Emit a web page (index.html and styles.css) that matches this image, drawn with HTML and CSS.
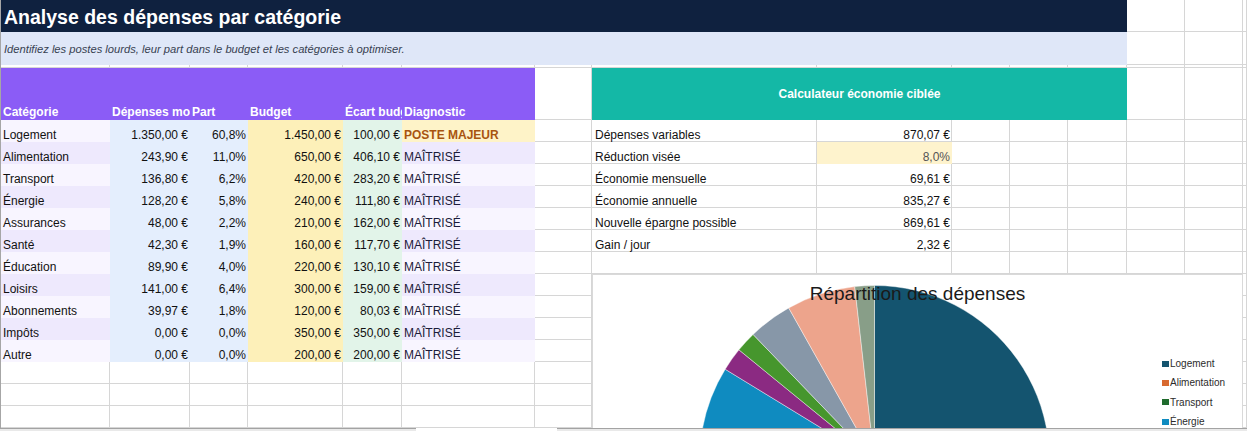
FILE: index.html
```html
<!DOCTYPE html>
<html lang="fr">
<head>
<meta charset="utf-8">
<title>Analyse des dépenses par catégorie</title>
<link rel="stylesheet" href="styles.css">
</head>
<body>
<div class="sheet">
  <div class="grid">
    <!-- row 1 -->
    <div class="c title">Analyse des dépenses par catégorie</div>
    <div class="c e"></div><div class="c e"></div><div class="c e"></div>
    <!-- row 2 -->
    <div class="c sub">Identifiez les postes lourds, leur part dans le budget et les catégories à optimiser.</div>
    <div class="c e"></div><div class="c e"></div><div class="c e"></div>
    <!-- row 3 -->
    <div class="c e"></div><div class="c e"></div><div class="c e"></div><div class="c e"></div><div class="c e"></div>
    <div class="c e"></div><div class="c e"></div><div class="c e"></div><div class="c e"></div><div class="c e"></div>
    <div class="c e"></div><div class="c e"></div><div class="c e"></div><div class="c e"></div><div class="c e"></div>
    <!-- row 4 header -->
    <div class="c hd">Catégorie</div>
    <div class="c hd">Dépenses mois</div>
    <div class="c hd">Part</div>
    <div class="c hd">Budget</div>
    <div class="c hd">Écart budget</div>
    <div class="c hd">Diagnostic</div>
    <div class="c e"></div>
    <div class="c teal">Calculateur économie ciblée</div>
    <div class="c e"></div><div class="c e"></div><div class="c e"></div>

    <!-- data 1 -->
    <div class="c la">Logement</div><div class="c bl r">1.350,00 €</div><div class="c bl r">60,8%</div><div class="c ye r">1.450,00 €</div><div class="c gr r">100,00 €</div><div class="c maj">POSTE MAJEUR</div>
    <div class="c e"></div><div class="c e lab">Dépenses variables</div><div class="c e r">870,07 €</div>
    <div class="c e"></div><div class="c e"></div><div class="c e"></div><div class="c e"></div><div class="c e"></div><div class="c e"></div>
    <!-- data 2 -->
    <div class="c lb">Alimentation</div><div class="c bl r">243,90 €</div><div class="c bl r">11,0%</div><div class="c ye r">650,00 €</div><div class="c gr r">406,10 €</div><div class="c lb ok">MAÎTRISÉ</div>
    <div class="c e"></div><div class="c e lab">Réduction visée</div><div class="c pct r">8,0%</div>
    <div class="c e"></div><div class="c e"></div><div class="c e"></div><div class="c e"></div><div class="c e"></div><div class="c e"></div>
    <!-- data 3 -->
    <div class="c la">Transport</div><div class="c bl r">136,80 €</div><div class="c bl r">6,2%</div><div class="c ye r">420,00 €</div><div class="c gr r">283,20 €</div><div class="c la ok">MAÎTRISÉ</div>
    <div class="c e"></div><div class="c e lab">Économie mensuelle</div><div class="c e r">69,61 €</div>
    <div class="c e"></div><div class="c e"></div><div class="c e"></div><div class="c e"></div><div class="c e"></div><div class="c e"></div>
    <!-- data 4 -->
    <div class="c lb">Énergie</div><div class="c bl r">128,20 €</div><div class="c bl r">5,8%</div><div class="c ye r">240,00 €</div><div class="c gr r">111,80 €</div><div class="c lb ok">MAÎTRISÉ</div>
    <div class="c e"></div><div class="c e lab">Économie annuelle</div><div class="c e r">835,27 €</div>
    <div class="c e"></div><div class="c e"></div><div class="c e"></div><div class="c e"></div><div class="c e"></div><div class="c e"></div>
    <!-- data 5 -->
    <div class="c la">Assurances</div><div class="c bl r">48,00 €</div><div class="c bl r">2,2%</div><div class="c ye r">210,00 €</div><div class="c gr r">162,00 €</div><div class="c la ok">MAÎTRISÉ</div>
    <div class="c e"></div><div class="c e lab">Nouvelle épargne possible</div><div class="c e r">869,61 €</div>
    <div class="c e"></div><div class="c e"></div><div class="c e"></div><div class="c e"></div><div class="c e"></div><div class="c e"></div>
    <!-- data 6 -->
    <div class="c lb">Santé</div><div class="c bl r">42,30 €</div><div class="c bl r">1,9%</div><div class="c ye r">160,00 €</div><div class="c gr r">117,70 €</div><div class="c lb ok">MAÎTRISÉ</div>
    <div class="c e"></div><div class="c e lab">Gain / jour</div><div class="c e r">2,32 €</div>
    <div class="c e"></div><div class="c e"></div><div class="c e"></div><div class="c e"></div><div class="c e"></div><div class="c e"></div>
    <!-- data 7 -->
    <div class="c la">Éducation</div><div class="c bl r">89,90 €</div><div class="c bl r">4,0%</div><div class="c ye r">220,00 €</div><div class="c gr r">130,10 €</div><div class="c la ok">MAÎTRISÉ</div>
    <div class="c e"></div><div class="c e"></div><div class="c e"></div>
    <div class="c e"></div><div class="c e"></div><div class="c e"></div><div class="c e"></div><div class="c e"></div><div class="c e"></div>
    <!-- data 8 -->
    <div class="c lb">Loisirs</div><div class="c bl r">141,00 €</div><div class="c bl r">6,4%</div><div class="c ye r">300,00 €</div><div class="c gr r">159,00 €</div><div class="c lb ok">MAÎTRISÉ</div>
    <div class="c e"></div><div class="c e"></div><div class="c e"></div>
    <div class="c e"></div><div class="c e"></div><div class="c e"></div><div class="c e"></div><div class="c e"></div><div class="c e"></div>
    <!-- data 9 -->
    <div class="c la">Abonnements</div><div class="c bl r">39,97 €</div><div class="c bl r">1,8%</div><div class="c ye r">120,00 €</div><div class="c gr r">80,03 €</div><div class="c la ok">MAÎTRISÉ</div>
    <div class="c e"></div><div class="c e"></div><div class="c e"></div>
    <div class="c e"></div><div class="c e"></div><div class="c e"></div><div class="c e"></div><div class="c e"></div><div class="c e"></div>
    <!-- data 10 -->
    <div class="c lb">Impôts</div><div class="c bl r">0,00 €</div><div class="c bl r">0,0%</div><div class="c ye r">350,00 €</div><div class="c gr r">350,00 €</div><div class="c lb ok">MAÎTRISÉ</div>
    <div class="c e"></div><div class="c e"></div><div class="c e"></div>
    <div class="c e"></div><div class="c e"></div><div class="c e"></div><div class="c e"></div><div class="c e"></div><div class="c e"></div>
    <!-- data 11 -->
    <div class="c la">Autre</div><div class="c bl r">0,00 €</div><div class="c bl r">0,0%</div><div class="c ye r">200,00 €</div><div class="c gr r">200,00 €</div><div class="c la ok">MAÎTRISÉ</div>
    <div class="c e"></div><div class="c e"></div><div class="c e"></div>
    <div class="c e"></div><div class="c e"></div><div class="c e"></div><div class="c e"></div><div class="c e"></div><div class="c e"></div>

    <!-- empty rows -->
    <div class="c e"></div><div class="c e"></div><div class="c e"></div><div class="c e"></div><div class="c e"></div>
    <div class="c e"></div><div class="c e"></div><div class="c e"></div><div class="c e"></div><div class="c e"></div>
    <div class="c e"></div><div class="c e"></div><div class="c e"></div><div class="c e"></div><div class="c e"></div>

    <div class="c e"></div><div class="c e"></div><div class="c e"></div><div class="c e"></div><div class="c e"></div>
    <div class="c e"></div><div class="c e"></div><div class="c e"></div><div class="c e"></div><div class="c e"></div>
    <div class="c e"></div><div class="c e"></div><div class="c e"></div><div class="c e"></div><div class="c e"></div>

    <div class="c e"></div><div class="c e"></div><div class="c e"></div><div class="c e"></div><div class="c e"></div>
    <div class="c e"></div><div class="c e"></div><div class="c e"></div><div class="c e"></div><div class="c e"></div>
    <div class="c e"></div><div class="c e"></div><div class="c e"></div><div class="c e"></div><div class="c e"></div>
  </div>

  <div class="chart">
    <svg class="pie" width="650" height="200" viewBox="0 0 650 200">
      <g stroke="#ffffff" stroke-opacity="0.55" stroke-width="0.75">
        <path fill="#14546f" d="M282.5 186.5 L282.5 11.5 A175 175 0 1 1 172.58 322.67 Z"/>
        <path fill="#d8692f" d="M282.5 186.5 L172.58 322.67 A175 175 0 0 1 111.03 221.5 Z"/>
        <path fill="#1f6b2d" d="M282.5 186.5 L111.03 221.5 A175 175 0 0 1 110.51 154.16 Z"/>
        <path fill="#0f8bc0" d="M282.5 186.5 L110.51 154.16 A175 175 0 0 1 133.19 95.24 Z"/>
        <path fill="#8b2a82" d="M282.5 186.5 L133.19 95.24 A175 175 0 0 1 146.93 75.85 Z"/>
        <path fill="#46962d" d="M282.5 186.5 L146.93 75.85 A175 175 0 0 1 161.08 60.48 Z"/>
        <path fill="#8797a8" d="M282.5 186.5 L161.08 60.48 A175 175 0 0 1 196.73 33.95 Z"/>
        <path fill="#eda48c" d="M282.5 186.5 L196.73 33.95 A175 175 0 0 1 262.74 12.62 Z"/>
        <path fill="#889e88" d="M282.5 186.5 L262.74 12.62 A175 175 0 0 1 282.5 11.5 Z"/>
      </g>
    </svg>
    <div class="ctitle">Répartition des dépenses</div>
    <div class="legend">
      <div class="li"><span class="sw sw1"></span>Logement</div>
      <div class="li"><span class="sw sw2"></span>Alimentation</div>
      <div class="li"><span class="sw sw3"></span>Transport</div>
      <div class="li"><span class="sw sw4"></span>Énergie</div>
    </div>
  </div>
</div>
<div class="hs">
  <div class="bar b1"></div>
  <div class="gapw"></div>
  <div class="bar b2"></div>
</div>
</body>
</html>
```

FILE: styles.css
```css
* { box-sizing: border-box; }
html, body { margin: 0; padding: 0; background: #ffffff; }
body {
  font-family: "Liberation Sans", Arial, sans-serif;
  font-size: 12px;
  color: #111111;
  width: 1247px;
  height: 431px;
  overflow: hidden;
}
.sheet {
  position: relative;
  height: 428px;
  overflow: hidden;
  border-left: 1px solid #a6a6a6;
}
.grid {
  display: grid;
  grid-template-columns: 109px 80px 58px 95px 59px 133px 57px 225px 135px 58px 58px 59px 58px 58px 1fr;
  grid-template-rows: 32px 33px 3px 52px repeat(14, 22px);
}
.c {
  min-width: 0;
  overflow: hidden;
  white-space: nowrap;
  display: flex;
  align-items: flex-end;
  padding: 0 2px;
  line-height: 13px;
}
.e { box-shadow: inset -1px -1px 0 #d6d6d6; }
.lab { padding-left: 3px; }
.r { justify-content: flex-end; }

.title {
  grid-column: span 12;
  background: #0f213f;
  color: #ffffff;
  font-weight: 700;
  font-size: 19.5px;
  line-height: 22px;
  align-items: center;
  padding-left: 3px;
  padding-top: 1px;
}
.sub {
  grid-column: span 12;
  background: #dfe7f8;
  color: #374151;
  font-style: italic;
  font-size: 11.2px;
  align-items: center;
  padding-left: 3px;
  padding-top: 1px;
}
.hd {
  background: #8b5cf6;
  color: #ffffff;
  font-weight: 700;
  padding-bottom: 1px;
}
.teal {
  grid-column: span 5;
  background: #14b8a6;
  color: #ffffff;
  font-weight: 700;
  align-items: center;
  justify-content: center;
}
.la { background: #f8f5ff; }
.lb { background: #eee9fd; }
.bl { background: #e4eefd; }
.ye { background: #fdf0b9; }
.gr { background: #e2f4e9; }
.maj { background: #fef3c8; color: #a8540f; font-weight: 700; }
.ok { color: #1c1b3a; }
.pct { background: #fef3cd; color: #555555; }

.chart {
  position: absolute;
  left: 591px;
  top: 274px;
  width: 651px;
  height: 200px;
  background: #ffffff;
  border: 1px solid #d9d9d9;
}
.pie { position: absolute; left: -1px; top: -1px; display: block; }
.ctitle {
  position: absolute;
  left: 0;
  right: 0;
  top: 8px;
  text-align: center;
  font-size: 19px;
  line-height: 22px;
  color: #1a1a1a;
}
.legend {
  position: absolute;
  left: 569px;
  top: 79px;
  display: flex;
  flex-direction: column;
  font-size: 10px;
  color: #2b2b2b;
}
.li { height: 19.3px; display: flex; align-items: center; gap: 1px; }
.sw { width: 7px; height: 6px; display: inline-block; }
.sw1 { background: #14546f; }
.sw2 { background: #d8692f; }
.sw3 { background: #1f6b2d; }
.sw4 { background: #0f8bc0; }

.hs { display: flex; height: 3px; }
.bar { border-top: 1px solid #a3a3a3; background: #e9e9e9; }
.b1 { width: 416px; }
.gapw { width: 141px; }
.b2 { flex: 1; }
```
